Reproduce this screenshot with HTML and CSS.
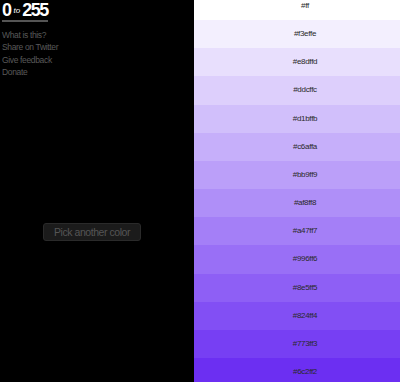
FILE: index.html
```html
<!DOCTYPE html>
<html lang="en">
<head>
    <meta charset="UTF-8">
    <meta name="viewport" content="width=device-width, initial-scale=1.0">
    <title>0 to 255</title>
    <link rel="stylesheet" href="styles.css">
</head>
<body>
    <div class="sidebar">
        <h1 class="logo">0<span class="to">to</span>255</h1>
        <ul class="links">
            <li><a href="#">What is this?</a></li>
            <li><a href="#">Share on Twitter</a></li>
            <li><a href="#">Give feedback</a></li>
            <li><a href="#">Donate</a></li>
        </ul>
        <div class="pick">
            <button class="pick-btn">Pick another color</button>
        </div>
    </div>

    <!-- Shades of the chosen color -->
    <div class="swatches">
        <div class="swatch" style="background-color: #ffffff">#ff</div>
        <div class="swatch" style="background-color: #f3effe">#f3effe</div>
        <div class="swatch" style="background-color: #e8dffd">#e8dffd</div>
        <div class="swatch" style="background-color: #ddcffc">#ddcffc</div>
        <div class="swatch" style="background-color: #d1bffb">#d1bffb</div>
        <div class="swatch" style="background-color: #c6affa">#c6affa</div>
        <div class="swatch" style="background-color: #bb9ff9">#bb9ff9</div>
        <div class="swatch" style="background-color: #af8ff8">#af8ff8</div>
        <div class="swatch" style="background-color: #a47ff7">#a47ff7</div>
        <div class="swatch" style="background-color: #996ff6">#996ff6</div>
        <div class="swatch" style="background-color: #8e5ff5">#8e5ff5</div>
        <div class="swatch" style="background-color: #824ff4">#824ff4</div>
        <div class="swatch" style="background-color: #773ff3">#773ff3</div>
        <div class="swatch" style="background-color: #6c2ff2">#6c2ff2</div>
        <div class="swatch" style="background-color: #611ff1">#611ff1</div>
    </div>
</body>
</html>
```

FILE: styles.css
```css
html, body {
    height: 100%;
}

body {
    margin: 0;
    display: flex;
    overflow: hidden;
    background-color: #000;
    font-family: "Liberation Sans", Arial, sans-serif;
}

.sidebar {
    width: 194px;
    flex-shrink: 0;
    background-color: #000;
    padding: 0 2px;
    box-sizing: border-box;
}

.logo {
    display: inline-block;
    margin: 0;
    padding: 1px 0 0;
    font-size: 18px;
    line-height: 18px;
    font-weight: bold;
    letter-spacing: -1.5px;
    color: #fff;
    border-bottom: 2px solid #555;
}

.logo .to {
    font-size: 8px;
    font-style: italic;
    font-weight: normal;
    letter-spacing: 0;
    margin: 0 2px 0 3px;
    vertical-align: 3px;
}

.links {
    list-style: none;
    margin: 7px 0 0;
    padding: 0;
    font-size: 8.5px;
    line-height: 12.3px;
    letter-spacing: -0.35px;
}

.links a {
    color: #595959;
    text-decoration: none;
}

.pick {
    margin-top: 144px;
    padding-right: 10px;
    text-align: center;
}

.pick-btn {
    width: 98px;
    height: 18px;
    padding: 0;
    font-family: inherit;
    font-size: 10.5px;
    letter-spacing: -0.45px;
    color: #555;
    background-color: #1b1b1b;
    border: 1px solid #2a2a2a;
    border-radius: 3px;
    cursor: pointer;
}

.swatches {
    flex: 1;
    margin-top: -8px;
    overflow: hidden;
}

.swatch {
    height: 28.17px;
    line-height: 28px;
    padding-left: 16px;
    text-align: center;
    font-size: 8px;
    letter-spacing: -0.3px;
    color: #2a2a2a;
}
```
